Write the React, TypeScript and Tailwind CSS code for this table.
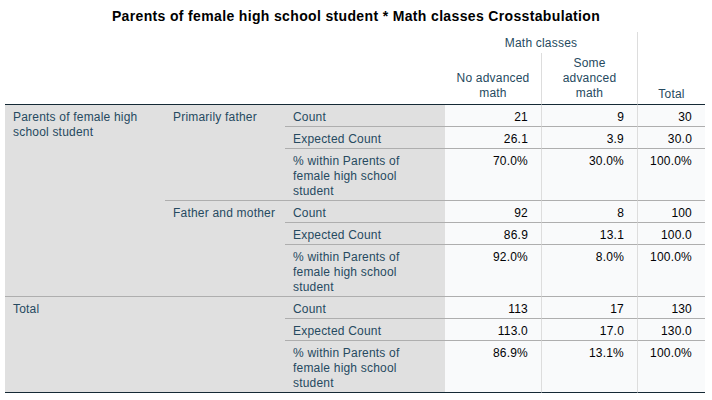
const stats = ['Count', 'Expected Count', '% within Parents of female high school student'];

type Group = { label: string; rows: string[][] };

const groups: Group[] = [
  {
    label: 'Primarily father',
    rows: [
      ['21', '9', '30'],
      ['26.1', '3.9', '30.0'],
      ['70.0%', '30.0%', '100.0%'],
    ],
  },
  {
    label: 'Father and mother',
    rows: [
      ['92', '8', '100'],
      ['86.9', '13.1', '100.0'],
      ['92.0%', '8.0%', '100.0%'],
    ],
  },
];

const total = [
  ['113', '17', '130'],
  ['113.0', '17.0', '130.0'],
  ['86.9%', '13.1%', '100.0%'],
];

function StatLabel({ i }: { i: number }) {
  if (i === 2)
    return (
      <>
        % within Parents of
        <br />
        female high school
        <br />
        student
      </>
    );
  return <>{stats[i]}</>;
}

function DataCells({ vals, top }: { vals: string[]; top: string }) {
  return (
    <>
      {vals.map((v, k) => (
        <td
          key={k}
          className={`bg-[#f9fafb] text-right align-top pt-[5px] pb-[1px] pr-[13px] text-[#010205] border-t ${top} ${
            k > 0 ? 'border-l border-l-[#dddddd]' : ''
          }`}
        >
          {v}
        </td>
      ))}
    </>
  );
}

export default function App() {
  return (
    <div className="w-[712px] h-[400px] bg-white font-['Liberation_Sans',Arial,sans-serif] text-[12px] leading-[15px] tracking-[0.2px]">
      <div className="h-[32px] flex items-center justify-center font-bold text-[14px] text-black tracking-[0.35px]">
        Parents of female high school student * Math classes Crosstabulation
      </div>
      <table className="ml-[5px] table-fixed border-separate border-spacing-0 w-[700px] text-[#264a60]">
        <colgroup>
          <col className="w-[160px]" />
          <col className="w-[120px]" />
          <col className="w-[160px]" />
          <col className="w-[96px]" />
          <col className="w-[96px]" />
          <col className="w-[68px]" />
        </colgroup>
        <thead>
          <tr>
            <th colSpan={3} rowSpan={2} className="bg-white"></th>
            <th colSpan={2} className="font-normal text-center pt-[4px] pb-[2px] h-[21px]">
              Math classes
            </th>
            <th
              rowSpan={2}
              className="font-normal text-center align-bottom pb-[2px] border-l border-l-[#dddddd]"
            >
              Total
            </th>
          </tr>
          <tr>
            <th className="font-normal text-center align-bottom pt-[3px] pb-[3px]">
              No advanced
              <br />
              math
            </th>
            <th className="font-normal text-center align-bottom pt-[3px] pb-[3px] border-l border-l-[#dddddd]">
              Some
              <br />
              advanced
              <br />
              math
            </th>
          </tr>
        </thead>
        <tbody>
          {groups.map((g, gi) =>
            g.rows.map((vals, i) => {
              const first = gi === 0 && i === 0;
              const top = first ? 'border-t-[#152935]' : 'border-t-[#aeaeae]';
              return (
                <tr key={`${gi}-${i}`}>
                  {first && (
                    <td
                      rowSpan={6}
                      className="bg-[#e0e0e0] align-top pl-[8px] pt-[5px] border-t border-t-[#152935]"
                    >
                      Parents of female high
                      <br />
                      school student
                    </td>
                  )}
                  {i === 0 && (
                    <td
                      rowSpan={3}
                      className={`bg-[#e0e0e0] align-top pl-[8px] pt-[5px] border-t ${top}`}
                    >
                      {g.label}
                    </td>
                  )}
                  <td className={`bg-[#e0e0e0] align-top pl-[8px] pt-[5px] pb-[1px] border-t ${top}`}>
                    <StatLabel i={i} />
                  </td>
                  <DataCells vals={vals} top={top} />
                </tr>
              );
            })
          )}
          {total.map((vals, i) => (
            <tr key={`t-${i}`}>
              {i === 0 && (
                <td
                  rowSpan={3}
                  colSpan={2}
                  className="bg-[#e0e0e0] align-top pl-[8px] pt-[5px] border-t border-t-[#aeaeae] border-b border-b-[#152935]"
                >
                  Total
                </td>
              )}
              <td
                className={`bg-[#e0e0e0] align-top pl-[8px] pt-[5px] pb-[1px] border-t border-t-[#aeaeae] ${
                  i === 2 ? 'border-b border-b-[#152935]' : ''
                }`}
              >
                <StatLabel i={i} />
              </td>
              {vals.map((v, k) => (
                <td
                  key={k}
                  className={`bg-[#f9fafb] text-right align-top pt-[5px] pb-[1px] pr-[13px] text-[#010205] border-t border-t-[#aeaeae] ${
                    k > 0 ? 'border-l border-l-[#dddddd]' : ''
                  } ${i === 2 ? 'border-b border-b-[#152935]' : ''}`}
                >
                  {v}
                </td>
              ))}
            </tr>
          ))}
        </tbody>
      </table>
    </div>
  );
}
